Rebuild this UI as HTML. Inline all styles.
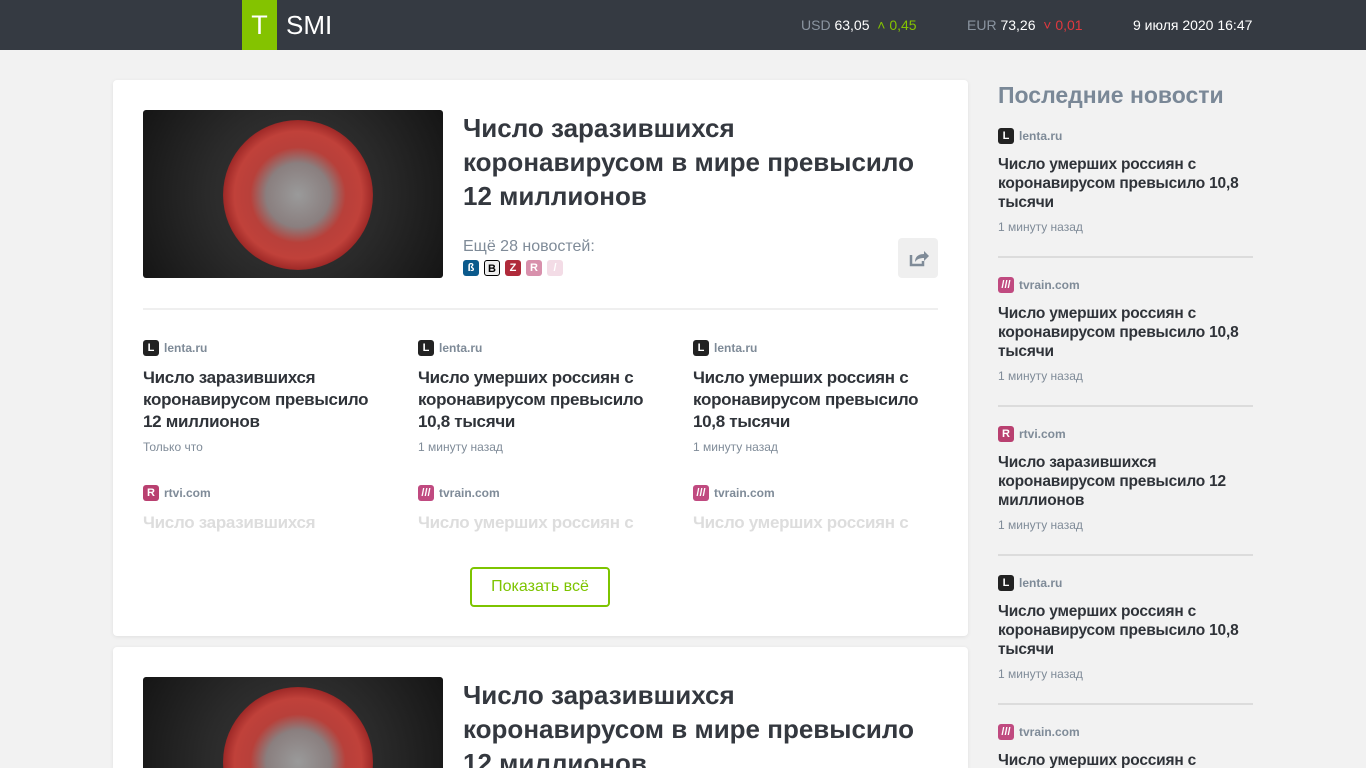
<!DOCTYPE html>
<html style="height:768px;overflow:hidden"><head><meta charset="utf-8"><style>
*{margin:0;padding:0;box-sizing:border-box}
body{width:1366px;height:768px;overflow:hidden;background:#f2f2f2;font-family:"Liberation Sans",Roboto,sans-serif;position:relative}
.top{position:absolute;left:0;top:0;width:1366px;height:50px;background:#353a42}
.logoT{position:absolute;left:242px;top:0;width:35px;height:50px;background:#84c300;color:#fff;font-size:27px;text-align:center;line-height:50px}
.logoS{position:absolute;left:286px;top:0;color:#fff;font-size:26px;line-height:50px}
.cur{position:absolute;top:17px;font-size:14px;color:#fff;white-space:nowrap}
.g{color:#8a94a0}
.card{position:absolute;left:113px;width:855px;background:#fff;border-radius:4px;box-shadow:0 1px 4px rgba(0,0,0,.08);overflow:hidden}
.img{position:absolute;left:30px;width:300px;height:168px;border-radius:3px;background:radial-gradient(circle at 50% 50%,#3a3a3a 0,#2a2a2a 50%,#151515 100%);overflow:hidden}
.img:after{content:"";position:absolute;left:80px;top:10px;width:150px;height:150px;border-radius:50%;background:radial-gradient(circle,#9a9a9a 0,#8a7f7f 30%,#b8403a 45%,#c0413a 60%,#a02a28 70%,rgba(120,30,30,.4) 73%,transparent 76%)}
.h1{position:absolute;left:350px;width:465px;font-size:26px;line-height:34px;font-weight:bold;color:#34383f}
.more{position:absolute;left:350px;font-size:16px;color:#7f8b98}
.ic{display:inline-block;width:16px;height:16px;border-radius:3px;margin-right:5px;vertical-align:top;color:#fff;font-size:11px;font-weight:bold;text-align:center;line-height:16px}
.share{position:absolute;left:785px;width:40px;height:40px;border-radius:4px;background:#efefef}
.div{position:absolute;left:30px;width:795px;height:2px;background:#efefef}
.col{position:absolute;width:245px}
.src{font-size:12px;color:#7f8b98;font-weight:bold;line-height:16px;height:16px}
.L{background:#222}
.R{background:#b94070}
.T{background:#c04a80}
.t{font-size:17px;letter-spacing:-0.3px;line-height:22px;color:#2f3339;font-weight:bold;margin-top:11px}
.tm{font-size:12px;color:#7f8b98;margin-top:7px}
.btn{position:absolute;left:357px;top:487px;width:140px;height:40px;border:2px solid #7dc400;border-radius:4px;color:#7dc400;font-size:16px;text-align:center;line-height:36px}
.sh{position:absolute;left:998px;top:82px;font-size:23px;font-weight:bold;color:#7a8897}
.si{position:absolute;left:998px;width:255px;height:130px;border-bottom:2px solid #dcdcdc}
.si .t{font-size:15.5px;letter-spacing:-0.2px;line-height:19px;margin-top:11px}
.si .tm{margin-top:8px}
</style></head><body>
<div class="top">
<div class="logoT">T</div><div class="logoS">SMI</div>
<div class="cur" style="left:801px"><span class="g">USD</span> 63,05 &nbsp;<span style="color:#84c300">˄ 0,45</span></div>
<div class="cur" style="left:967px"><span class="g">EUR</span> 73,26 &nbsp;<span style="color:#e0383e">˅ 0,01</span></div>
<div class="cur" style="left:1133px">9 июля 2020 16:47</div>
</div>

<div class="card" style="top:80px;height:556px">
<div class="img" style="top:30px"></div>
<div class="h1" style="top:31px">Число заразившихся коронавирусом в мире превысило 12 миллионов</div>
<div class="more" style="top:158px">Ещё 28 новостей:<div style="margin-top:4px"><span class="ic" style="background:#0b5a8c">ß</span><span class="ic" style="background:#eee;color:#000;border:1px solid #000">B</span><span class="ic" style="background:#b02a3a">Z</span><span class="ic" style="background:#d890ac">R</span><span class="ic" style="background:#f3dce6">/</span></div></div>
<div class="share" style="top:158px"><svg width="40" height="40"><path d="M13 17v10h12v-4" fill="none" stroke="#7f8b98" stroke-width="2.5"/><path d="M17 24c0-5 3-8 9-8v-3l5 5-5 5v-3c-4 0-7 1-9 4z" fill="#7f8b98"/></svg></div>
<div class="div" style="top:228px"></div>
<div class="col" style="left:30px;top:260px"><div class="src"><span class="ic L">L</span>lenta.ru</div><div class="t">Число заразившихся коронавирусом превысило 12 миллионов</div><div class="tm">Только что</div></div>
<div class="col" style="left:305px;top:260px"><div class="src"><span class="ic L">L</span>lenta.ru</div><div class="t">Число умерших россиян с коронавирусом превысило 10,8 тысячи</div><div class="tm">1 минуту назад</div></div>
<div class="col" style="left:580px;top:260px"><div class="src"><span class="ic L">L</span>lenta.ru</div><div class="t">Число умерших россиян с коронавирусом превысило 10,8 тысячи</div><div class="tm">1 минуту назад</div></div>
<div class="col" style="left:30px;top:405px"><div class="src"><span class="ic R">R</span>rtvi.com</div><div class="t" style="color:#ddd;height:22px;overflow:hidden">Число заразившихся</div></div>
<div class="col" style="left:305px;top:405px"><div class="src"><span class="ic T">///</span>tvrain.com</div><div class="t" style="color:#ddd;height:22px;overflow:hidden">Число умерших россиян с</div></div>
<div class="col" style="left:580px;top:405px"><div class="src"><span class="ic T">///</span>tvrain.com</div><div class="t" style="color:#ddd;height:22px;overflow:hidden">Число умерших россиян с</div></div>
<div class="btn">Показать всё</div>
</div>

<div class="card" style="top:647px;height:121px;border-radius:4px 4px 0 0">
<div class="img" style="top:30px"></div>
<div class="h1" style="top:31px">Число заразившихся коронавирусом в мире превысило 12 миллионов</div>
</div>

<div class="sh">Последние новости</div>
<div class="si" style="top:128px"><div class="src"><span class="ic L">L</span>lenta.ru</div><div class="t">Число умерших россиян с коронавирусом превысило 10,8 тысячи</div><div class="tm">1 минуту назад</div></div>
<div class="si" style="top:277px"><div class="src"><span class="ic T">///</span>tvrain.com</div><div class="t">Число умерших россиян с коронавирусом превысило 10,8 тысячи</div><div class="tm">1 минуту назад</div></div>
<div class="si" style="top:426px"><div class="src"><span class="ic R">R</span>rtvi.com</div><div class="t">Число заразившихся коронавирусом превысило 12 миллионов</div><div class="tm">1 минуту назад</div></div>
<div class="si" style="top:575px"><div class="src"><span class="ic L">L</span>lenta.ru</div><div class="t">Число умерших россиян с коронавирусом превысило 10,8 тысячи</div><div class="tm">1 минуту назад</div></div>
<div class="si" style="top:724px;height:44px;border:0;overflow:hidden"><div class="src"><span class="ic T">///</span>tvrain.com</div><div class="t">Число умерших россиян с коронавирусом</div></div>
</body></html>
